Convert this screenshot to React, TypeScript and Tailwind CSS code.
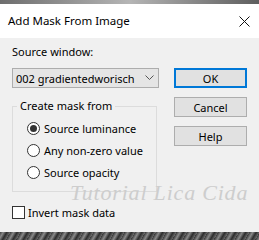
export default function App() {
  return (
    <div
      className="w-[259px] h-[240px] overflow-hidden flex flex-col bg-white text-[11px] text-black whitespace-nowrap"
      style={{ fontFamily: '"Noto Sans", "Open Sans", sans-serif' }}
    >
      {/* top backdrop strip */}
      <div className="h-[4px] bg-gradient-to-r from-[#6e6e6e] via-[#b5b5b5] to-[#5e5e5e]" />

      {/* title bar */}
      <div className="h-[34px] flex items-center justify-between pl-[8px] pr-[9px] bg-white">
        <span className="text-[11.5px] leading-none">Add Mask From Image</span>
        <svg width="11" height="11" viewBox="0 0 11 11" className="mt-[1px]">
          <path d="M0.5 0.5 L10.5 10.5 M10.5 0.5 L0.5 10.5" stroke="#111" strokeWidth="1" />
        </svg>
      </div>

      {/* body */}
      <div className="relative flex-1 bg-[#f0f0f0] flex">
        <div className="ml-[12px] w-[147px] flex flex-col">
          <div className="mt-[6px] leading-[16px]">Source window:</div>
          <div className="mt-[8px] h-[20px] border border-[#adadad] bg-[#e5e5e5] flex items-center justify-between pl-[3px] pr-[4px]">
            <span className="leading-none">002 gradientedworisch</span>
            <svg width="9" height="6" viewBox="0 0 9 6">
              <path d="M0.5 0.5 L4.5 4.5 L8.5 0.5" stroke="#555" strokeWidth="1" fill="none" />
            </svg>
          </div>

          <fieldset className="mt-[10px] w-[145px] h-[94px] border border-[#dcdcdc]">
            <legend className="ml-[4px] px-[3px] leading-[16px]">Create mask from</legend>
            <div className="flex flex-col gap-[9px] mt-[8px] pl-[14px]">
              <label className="flex items-center gap-[4px] leading-[13px]">
                <span className="w-[13px] h-[13px] rounded-full border border-[#333] bg-white flex items-center justify-center">
                  <span className="w-[7px] h-[7px] rounded-full bg-[#333]" />
                </span>
                Source luminance
              </label>
              <label className="flex items-center gap-[4px] leading-[13px]">
                <span className="w-[13px] h-[13px] rounded-full border border-[#333] bg-white" />
                Any non-zero value
              </label>
              <label className="flex items-center gap-[4px] leading-[13px]">
                <span className="w-[13px] h-[13px] rounded-full border border-[#333] bg-white" />
                Source opacity
              </label>
            </div>
          </fieldset>

          <label className="mt-[14px] flex items-center gap-[3px] leading-[13px]">
            <span className="w-[13px] h-[13px] border border-[#333] bg-white" />
            Invert mask data
          </label>
        </div>

        <div className="ml-[15px] mt-[30px] w-[73px] flex flex-col gap-[9px]">
          <button className="h-[20px] border-2 border-[#0078d7] bg-[#e1e1e1] leading-none">OK</button>
          <button className="h-[20px] border border-[#adadad] bg-[#e1e1e1] leading-none">Cancel</button>
          <button className="h-[20px] border border-[#adadad] bg-[#e1e1e1] leading-none">Help</button>
        </div>

        {/* watermark */}
        <div
          className="absolute left-[70px] top-[144px] text-[22px] italic text-[#cdcdcd] leading-none tracking-[0.8px] pointer-events-none"
          style={{ fontFamily: '"Liberation Serif", serif' }}
        >
          Tutorial Lica Cida
        </div>
      </div>

      {/* bottom backdrop strip */}
      <div className="h-[8px] bg-[repeating-linear-gradient(120deg,#3a3a3a_0px,#8a8a8a_3px,#2c2c2c_6px,#6a6a6a_9px)]" />
    </div>
  );
}
